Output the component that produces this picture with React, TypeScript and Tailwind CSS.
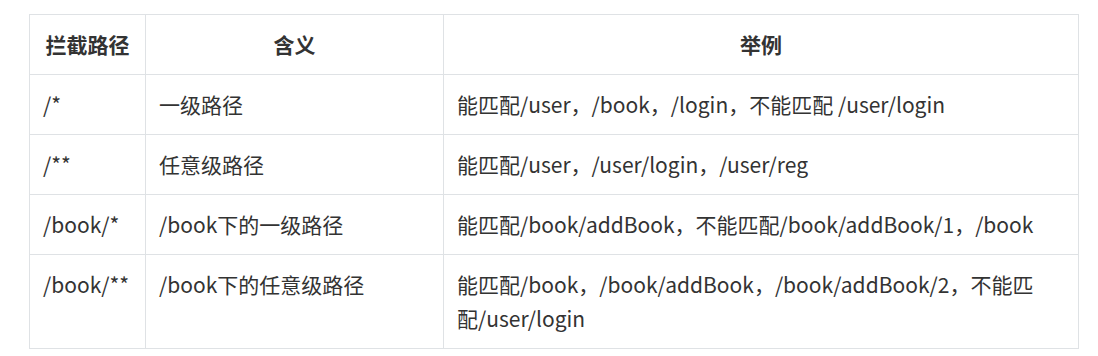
import React from 'react';

const rows: [string, string, string][] = [
  ['/*', '一级路径', '能匹配/user，/book，/login，不能匹配 /user/login'],
  ['/**', '任意级路径', '能匹配/user，/user/login，/user/reg'],
  ['/book/*', '/book下的一级路径', '能匹配/book/addBook，不能匹配/book/addBook/1，/book'],
  ['/book/**', '/book下的任意级路径', '能匹配/book，/book/addBook，/book/addBook/2，不能匹配/user/login'],
];

const cell = 'border border-[#dfe2e5] px-[13px] pt-[12px] pb-[13px] align-top';

export default function App() {
  return (
    <div
      className="w-[1098px] h-[356px] bg-white pl-[29px] pt-[14px] text-[21px] leading-[34px] text-[#333333]"
      style={{ fontFamily: '"Noto Sans CJK SC", "Noto Sans", sans-serif' }}
    >
      <table className="border-collapse w-[1049px] table-fixed">
        <colgroup>
          <col className="w-[116px]" />
          <col className="w-[298px]" />
          <col className="w-[635px]" />
        </colgroup>
        <thead>
          <tr>
            <th className={`${cell} font-bold text-center`}>拦截路径</th>
            <th className={`${cell} font-bold text-center`}>含义</th>
            <th className={`${cell} font-bold text-center`}>举例</th>
          </tr>
        </thead>
        <tbody>
          {rows.map(([path, meaning, example]) => (
            <tr key={path}>
              <td className={cell}>{path}</td>
              <td className={cell}>{meaning}</td>
              <td className={cell}>{example}</td>
            </tr>
          ))}
        </tbody>
      </table>
    </div>
  );
}
